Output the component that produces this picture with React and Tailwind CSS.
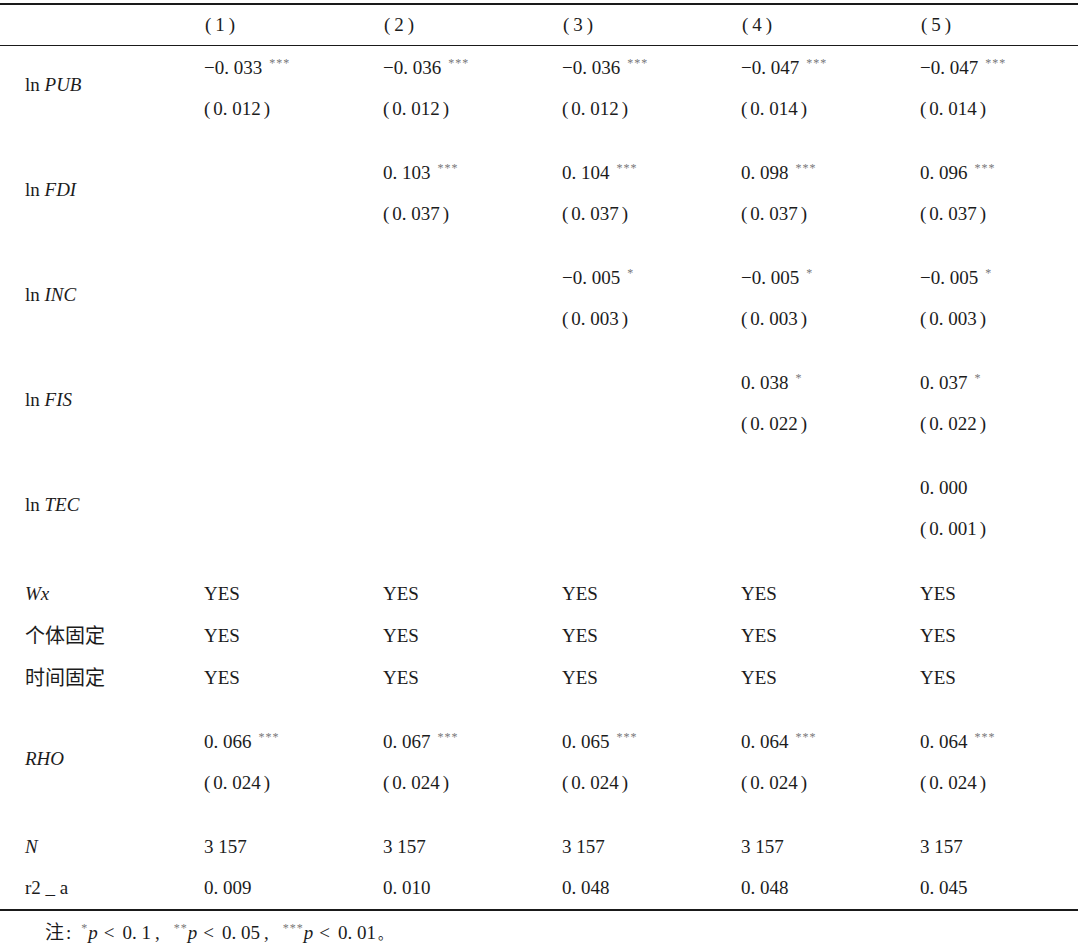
import React from "react";

const serif = { fontFamily: '"Liberation Serif", "Times New Roman", serif' };
const cjk = { fontFamily: '"Noto Sans CJK SC", "Liberation Serif", sans-serif' };

const blocks = [
  {
    name: "PUB",
    vals: [["−0. 033", "***"], ["−0. 036", "***"], ["−0. 036", "***"], ["−0. 047", "***"], ["−0. 047", "***"]],
    ses: ["0. 012", "0. 012", "0. 012", "0. 014", "0. 014"],
  },
  {
    name: "FDI",
    vals: [null, ["0. 103", "***"], ["0. 104", "***"], ["0. 098", "***"], ["0. 096", "***"]],
    ses: [null, "0. 037", "0. 037", "0. 037", "0. 037"],
  },
  {
    name: "INC",
    vals: [null, null, ["−0. 005", "*"], ["−0. 005", "*"], ["−0. 005", "*"]],
    ses: [null, null, "0. 003", "0. 003", "0. 003"],
  },
  {
    name: "FIS",
    vals: [null, null, null, ["0. 038", "*"], ["0. 037", "*"]],
    ses: [null, null, null, "0. 022", "0. 022"],
  },
  {
    name: "TEC",
    vals: [null, null, null, null, ["0. 000", ""]],
    ses: [null, null, null, null, "0. 001"],
  },
];

// stars sit inline so vertical-align can lift them
const Stars = ({ s, className = "ml-[7px]" }) =>
  s ? (
    <span className={`${className} text-[12px] text-[#777] tracking-[1px] align-[7px]`}>{s}</span>
  ) : null;

const Value = ({ v }) =>
  v ? (
    <div className="h-[41px] flex items-center whitespace-nowrap">
      <span>
        {v[0]}
        <Stars s={v[1]} />
      </span>
    </div>
  ) : (
    <div className="h-[41px]" />
  );

const Se = ({ v }) =>
  v ? (
    <div className="h-[41px] flex items-center whitespace-nowrap">
      <span>
        <span className="mr-[3px]">(</span>
        {v}
        <span className="ml-[3px]">)</span>
      </span>
    </div>
  ) : (
    <div className="h-[41px]" />
  );

const Block = ({ label, vals, ses, className = "mt-[23px]" }) => (
  <div className={`grid grid-cols-[204px_179px_179px_179px_179px_1fr] ${className}`}>
    <div className="row-span-2 flex items-center pl-[25px] pb-[8px] whitespace-nowrap">{label}</div>
    {vals.map((v, i) => (
      <Value key={"v" + i} v={v} />
    ))}
    {ses.map((v, i) => (
      <Se key={"s" + i} v={v} />
    ))}
  </div>
);

const SimpleRow = ({ label, cells, className = "" }) => (
  <div className={`grid grid-cols-[204px_179px_179px_179px_179px_1fr] h-[42px] items-center ${className}`}>
    <div className="pl-[25px] whitespace-nowrap">{label}</div>
    {cells.map((c, i) => (
      <div key={i} className="whitespace-nowrap">{c}</div>
    ))}
  </div>
);

export default function App() {
  const yes = ["YES", "YES", "YES", "YES", "YES"];

  return (
    <div className="w-[1080px] h-[950px] bg-white text-[#1c1c1c] text-[19px] pt-[3px]" style={serif}>
      <div className="w-[1078px] border-t-2 border-[#1a1a1a]">
        {/* header */}
        <div className="grid grid-cols-[204px_179px_179px_179px_179px_1fr] h-[41px] items-center border-b border-[#1a1a1a]">
          <div />
          {[1, 2, 3, 4, 5].map((n) => (
            <div key={n} className="pl-[1px]">
              (<span className="mx-[4px]">{n}</span>)
            </div>
          ))}
        </div>

        <div className="pt-[2px]">
          {blocks.map((b, i) => (
            <Block
              key={b.name}
              className={i === 0 ? "mt-0" : "mt-[23px]"}
              label={
                <span>
                  ln <i>{b.name}</i>
                </span>
              }
              vals={b.vals}
              ses={b.ses}
            />
          ))}

          <SimpleRow className="mt-[23px]" label={<i>Wx</i>} cells={yes} />
          <SimpleRow label={<span className="text-[20px]" style={cjk}>个体固定</span>} cells={yes} />
          <SimpleRow label={<span className="text-[20px]" style={cjk}>时间固定</span>} cells={yes} />

          <Block
            className="mt-[23px]"
            label={<i>RHO</i>}
            vals={[["0. 066", "***"], ["0. 067", "***"], ["0. 065", "***"], ["0. 064", "***"], ["0. 064", "***"]]}
            ses={["0. 024", "0. 024", "0. 024", "0. 024", "0. 024"]}
          />

          <div className="grid grid-cols-[204px_179px_179px_179px_179px_1fr] h-[41px] items-center mt-[23px]">
            <div className="pl-[25px]"><i>N</i></div>
            {["3 157", "3 157", "3 157", "3 157", "3 157"].map((c, i) => (
              <div key={i}>{c}</div>
            ))}
          </div>
          <div className="grid grid-cols-[204px_179px_179px_179px_179px_1fr] h-[41px] items-center">
            <div className="pl-[25px]">r2 _ a</div>
            {["0. 009", "0. 010", "0. 048", "0. 048", "0. 045"].map((c, i) => (
              <div key={i}>{c}</div>
            ))}
          </div>
        </div>

        {/* note */}
        <div className="border-t-2 border-[#1a1a1a] pl-[45px] h-[44px] flex items-center whitespace-nowrap">
          <span>
            <span style={cjk}>注</span>
            <span className="ml-[2px]">:</span>
            <Stars s="*" className="ml-[10px]" />
            <i>p</i>
            <span className="ml-[6px]">&lt;</span>
            <span className="ml-[8px]">0. 1</span>
            <span className="ml-[4px]">,</span>
            <Stars s="**" className="ml-[14px]" />
            <i>p</i>
            <span className="ml-[6px]">&lt;</span>
            <span className="ml-[8px]">0. 05</span>
            <span className="ml-[4px]">,</span>
            <Stars s="***" className="ml-[14px]" />
            <i>p</i>
            <span className="ml-[6px]">&lt;</span>
            <span className="ml-[8px]">0. 01</span>
            <span className="ml-[2px] text-[14px]" style={cjk}>。</span>
          </span>
        </div>
      </div>
    </div>
  );
}
